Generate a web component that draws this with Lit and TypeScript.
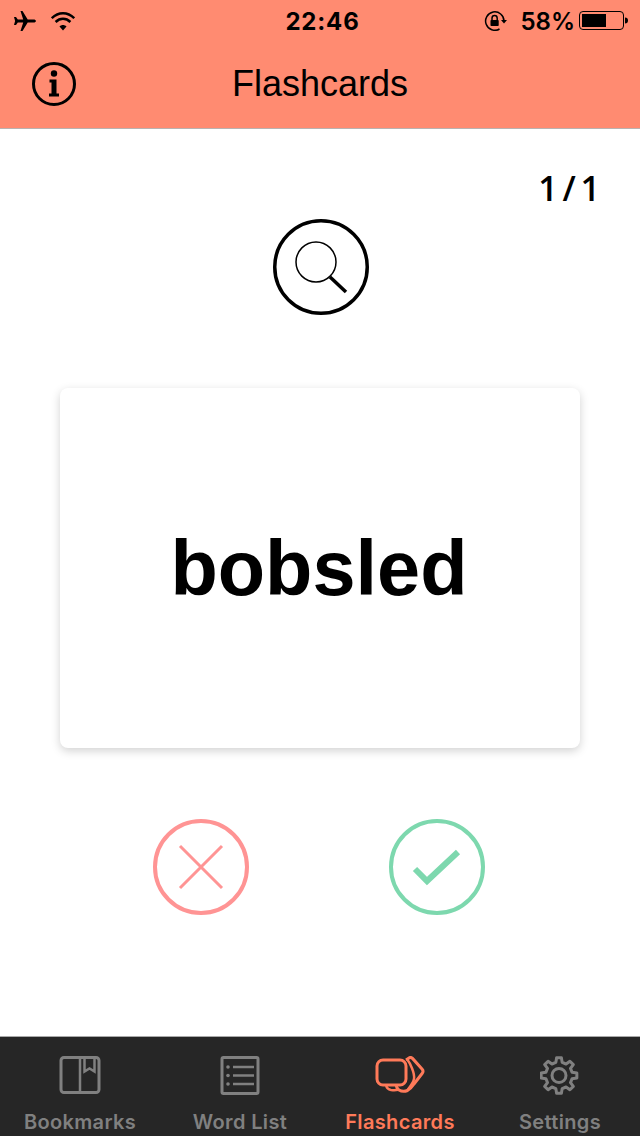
import { LitElement, html, css, svg } from "lit";
import { customElement } from "lit/decorators.js";

function gearPath(cx: number, cy: number, ro: number, ri: number, teeth: number): string {
  const pts: string[] = [];
  const step = (Math.PI * 2) / teeth;
  for (let i = 0; i < teeth; i++) {
    const a = i * step - Math.PI / 2;
    const seq: [number, number][] = [
      [ri, a - step * 0.3],
      [ro, a - step * 0.17],
      [ro, a + step * 0.17],
      [ri, a + step * 0.3],
    ];
    for (const [r, t] of seq) {
      pts.push(`${(cx + r * Math.cos(t)).toFixed(2)} ${(cy + r * Math.sin(t)).toFixed(2)}`);
    }
  }
  return "M" + pts.join("L") + "Z";
}

@customElement("app-root")
export class AppRoot extends LitElement {
  static styles = css`
    :host {
      display: flex;
      flex-direction: column;
      width: 640px;
      height: 1136px;
      background: #fff;
      font-family: "Liberation Sans", Arial, sans-serif;
      color: #000;
      overflow: hidden;
    }
    svg { display: block; flex: none; }
    .head {
      background: #ff8b71;
      border-bottom: 1px solid #b9b2b0;
      height: 128px;
      flex: none;
      display: flex;
      flex-direction: column;
    }
    .status {
      height: 38px;
      padding: 2px 11px 0 13px;
      display: grid;
      grid-template-columns: 1fr auto 1fr;
      align-items: center;
    }
    .status-l, .status-r { display: flex; align-items: center; }
    .status-l { gap: 14px; }
    .status-r { justify-content: flex-end; }
    .time {
      font-family: Inter, sans-serif;
      font-weight: 700;
      font-size: 24px;
      line-height: 36px;
      letter-spacing: 0.8px;
      margin: 2px 0 0 3px;
    }
    .pct {
      font-family: Inter, sans-serif;
      font-weight: 600;
      font-size: 24px;
      line-height: 36px;
      margin: 2px 4px 0 12px;
    }
    .nav {
      flex: 1;
      display: grid;
      grid-template-columns: 1fr auto 1fr;
      align-items: center;
      padding: 0 32px;
    }
    .title { font-size: 36px; line-height: 88px; }
    main {
      flex: 1;
      display: flex;
      flex-direction: column;
      align-items: center;
    }
    .count {
      align-self: flex-end;
      margin: 39px 40px 0 0;
      font-family: "Open Sans", sans-serif;
      font-weight: 600;
      font-size: 34px;
      word-spacing: -4px;
      line-height: 40px;
    }
    .lookup { margin: 11px 0 0 2px; }
    .card {
      margin-top: 73px;
      width: 520px;
      height: 360px;
      background: #fff;
      border-radius: 8px;
      box-shadow: 0 3px 10px rgba(0, 0, 0, 0.18);
      display: flex;
      align-items: center;
      justify-content: center;
    }
    .word { font-weight: 700; font-size: 77.500px; line-height: 90px; margin-right: 2px; }
    .actions { margin: 71px 2px 0 0; display: flex; gap: 140px; }
    .tabs {
      flex: none;
      height: 99px;
      background: #262626;
      border-top: 1px solid #a9a9a9;
      display: grid;
      grid-template-columns: repeat(4, 160px);
    }
    .tab {
      display: flex;
      flex-direction: column;
      align-items: center;
      color: #808080;
      font-family: Inter, sans-serif;
      font-weight: 600;
      font-size: 20px;
      letter-spacing: 0.35px;
    }
    .tab.on { color: #ff7a59; }
    .tab svg { margin-top: 19px; }
    .tab span { margin-top: 14px; line-height: 24px; white-space: nowrap; }
  `;

  render() {
    return html`
      <header class="head">
        <div class="status">
          <div class="status-l">
            <svg width="24" height="24" viewBox="0 0 24 24"><path transform="rotate(90 12 12)" d="M22 16.500v-2l-8.500-5.200V3.200C13.500 2.300 12.800 1 12 1s-1.500 1.300-1.500 2.200v6.100L2 14.500v2l8.500-2.700v5.400L8 21v2l4-1.100L16 23v-2l-2.500-1.800v-5.400z"/></svg>
            <svg width="24" height="20" viewBox="0 0 24 20" fill="none" stroke="#000" stroke-width="2.500">
              <path d="M.8 7.200C7.500 .6 16.500 .6 23.200 7.200"/>
              <path d="M4.600 11C9 6.800 15 6.800 19.400 11"/>
              <path d="M8.500 15.500L12 19.500L15.500 15.500C13.500 13.500 10.500 13.500 8.500 15.500Z" fill="#000" stroke="none"/>
            </svg>
          </div>
          <div class="time">22:46</div>
          <div class="status-r">
            <svg width="24" height="20" viewBox="0 0 24 20" fill="none" stroke="#000" stroke-width="1.500">
              <path d="M20 10A9.200 9.200 0 1 0 15.500 18"/>
              <path d="M17 9h6l-3 3.600z" fill="#000" stroke="none"/>
              <path d="M8 9V7.200a2.600 2.600 0 0 1 5.200 0V9" />
              <rect x="6.500" y="9" width="8.200" height="6" rx=".8" fill="#000" stroke="none"/>
            </svg>
            <span class="pct">58%</span>
            <svg width="50" height="20" viewBox="0 0 50 20">
              <rect x=".5" y=".5" width="44" height="18" rx="3.500" fill="none" stroke="#000"/>
              <rect x="3" y="3" width="24" height="13" fill="#000"/>
              <path d="M46 6.500c2 0 3 1.300 3 3s-1 3-3 3z" fill="#000"/>
            </svg>
          </div>
        </div>
        <div class="nav">
          <svg width="44" height="44" viewBox="0 0 44 44">
            <circle cx="22" cy="22" r="20.500" fill="none" stroke="#000" stroke-width="3"/>
            <circle cx="22" cy="11.500" r="3.200" fill="#000"/>
            <path d="M17.500 17.500h7v14h2.500v3h-10v-3h2.500v-11h-2z" fill="#000"/>
          </svg>
          <div class="title">Flashcards</div>
        </div>
      </header>
      <main>
        <div class="count">1 / 1</div>
        <svg class="lookup" width="96" height="96" viewBox="0 0 96 96" fill="none" stroke="#000">
          <circle cx="48" cy="48" r="46.250" stroke-width="3.500"/>
          <circle cx="43" cy="43" r="20" stroke-width="1.500"/>
          <path d="M57 58L73 73" stroke-width="3.500"/>
        </svg>
        <div class="card"><div class="word">bobsled</div></div>
        <div class="actions">
          <svg width="96" height="96" viewBox="0 0 96 96" fill="none" stroke="#ff9494">
            <circle cx="48" cy="48" r="46" stroke-width="4"/>
            <path d="M27 27L69 69M69 27L27 69" stroke-width="3"/>
          </svg>
          <svg width="96" height="96" viewBox="0 0 96 96" fill="none" stroke="#7dd8ae">
            <circle cx="48" cy="48" r="46" stroke-width="4"/>
            <path d="M26 50L38 62L69 33" stroke-width="6"/>
          </svg>
        </div>
      </main>
      <nav class="tabs">
        <div class="tab">
          <svg width="44" height="40" viewBox="0 0 44 40" fill="none" stroke="currentColor" stroke-width="3">
            <path d="M22 36.500H6a3 3 0 0 1-3-3V4.500a3 3 0 0 1 3-3h32a3 3 0 0 1 3 3v29a3 3 0 0 1-3 3z"/>
            <path d="M22 2v36" stroke-width="2.500"/>
            <path d="M26.500 2v13.500l5-3 5 3V2" stroke-width="2.500"/>
          </svg>
          <span>Bookmarks</span>
        </div>
        <div class="tab">
          <svg width="40" height="40" viewBox="0 0 40 40" fill="none" stroke="currentColor" stroke-width="3">
            <rect x="2" y="1.500" width="36" height="36" rx="1.500"/>
            <path d="M13 11h21M13 19.500h21M13 28h21" stroke-width="2.500"/>
            <circle cx="8" cy="11" r="1.800" fill="currentColor" stroke="none"/>
            <circle cx="8" cy="19.500" r="1.800" fill="currentColor" stroke="none"/>
            <circle cx="8" cy="28" r="1.800" fill="currentColor" stroke="none"/>
          </svg>
          <span>Word List</span>
        </div>
        <div class="tab on">
          <svg width="52" height="40" viewBox="0 0 52 40" fill="none" stroke="currentColor" stroke-width="3">
            <rect x="3" y="4" width="29" height="25" rx="6"/>
            <path d="M32 4l3-2c1.200-.8 2.500-.6 3.500.4L48 13c1.300 1.400 1.300 3 .1 4.500L40 28c-2 3-4 5-6.500 6.500-2.500 1-6 1-8.500-.5-1.500-1-2.500-2-3-5"/>
            <path d="M33 3c3 4 8 14 7 20-.5 3-2.500 6-6.500 11" stroke-width="2.500"/>
            <path d="M12 29c.5 2.500 2 4.500 5 5 2.500.3 5 .3 7-.2" stroke-width="2.500"/>
          </svg>
          <span>Flashcards</span>
        </div>
        <div class="tab">
          <svg width="40" height="40" viewBox="0 0 40 40" fill="none" stroke="currentColor" stroke-width="3">
            ${svg`<path d=${gearPath(19, 19.500, 18, 13.500, 8)} stroke-linejoin="round"/>`}
            <circle cx="19" cy="19.500" r="7"/>
          </svg>
          <span>Settings</span>
        </div>
      </nav>
    `;
  }
}
